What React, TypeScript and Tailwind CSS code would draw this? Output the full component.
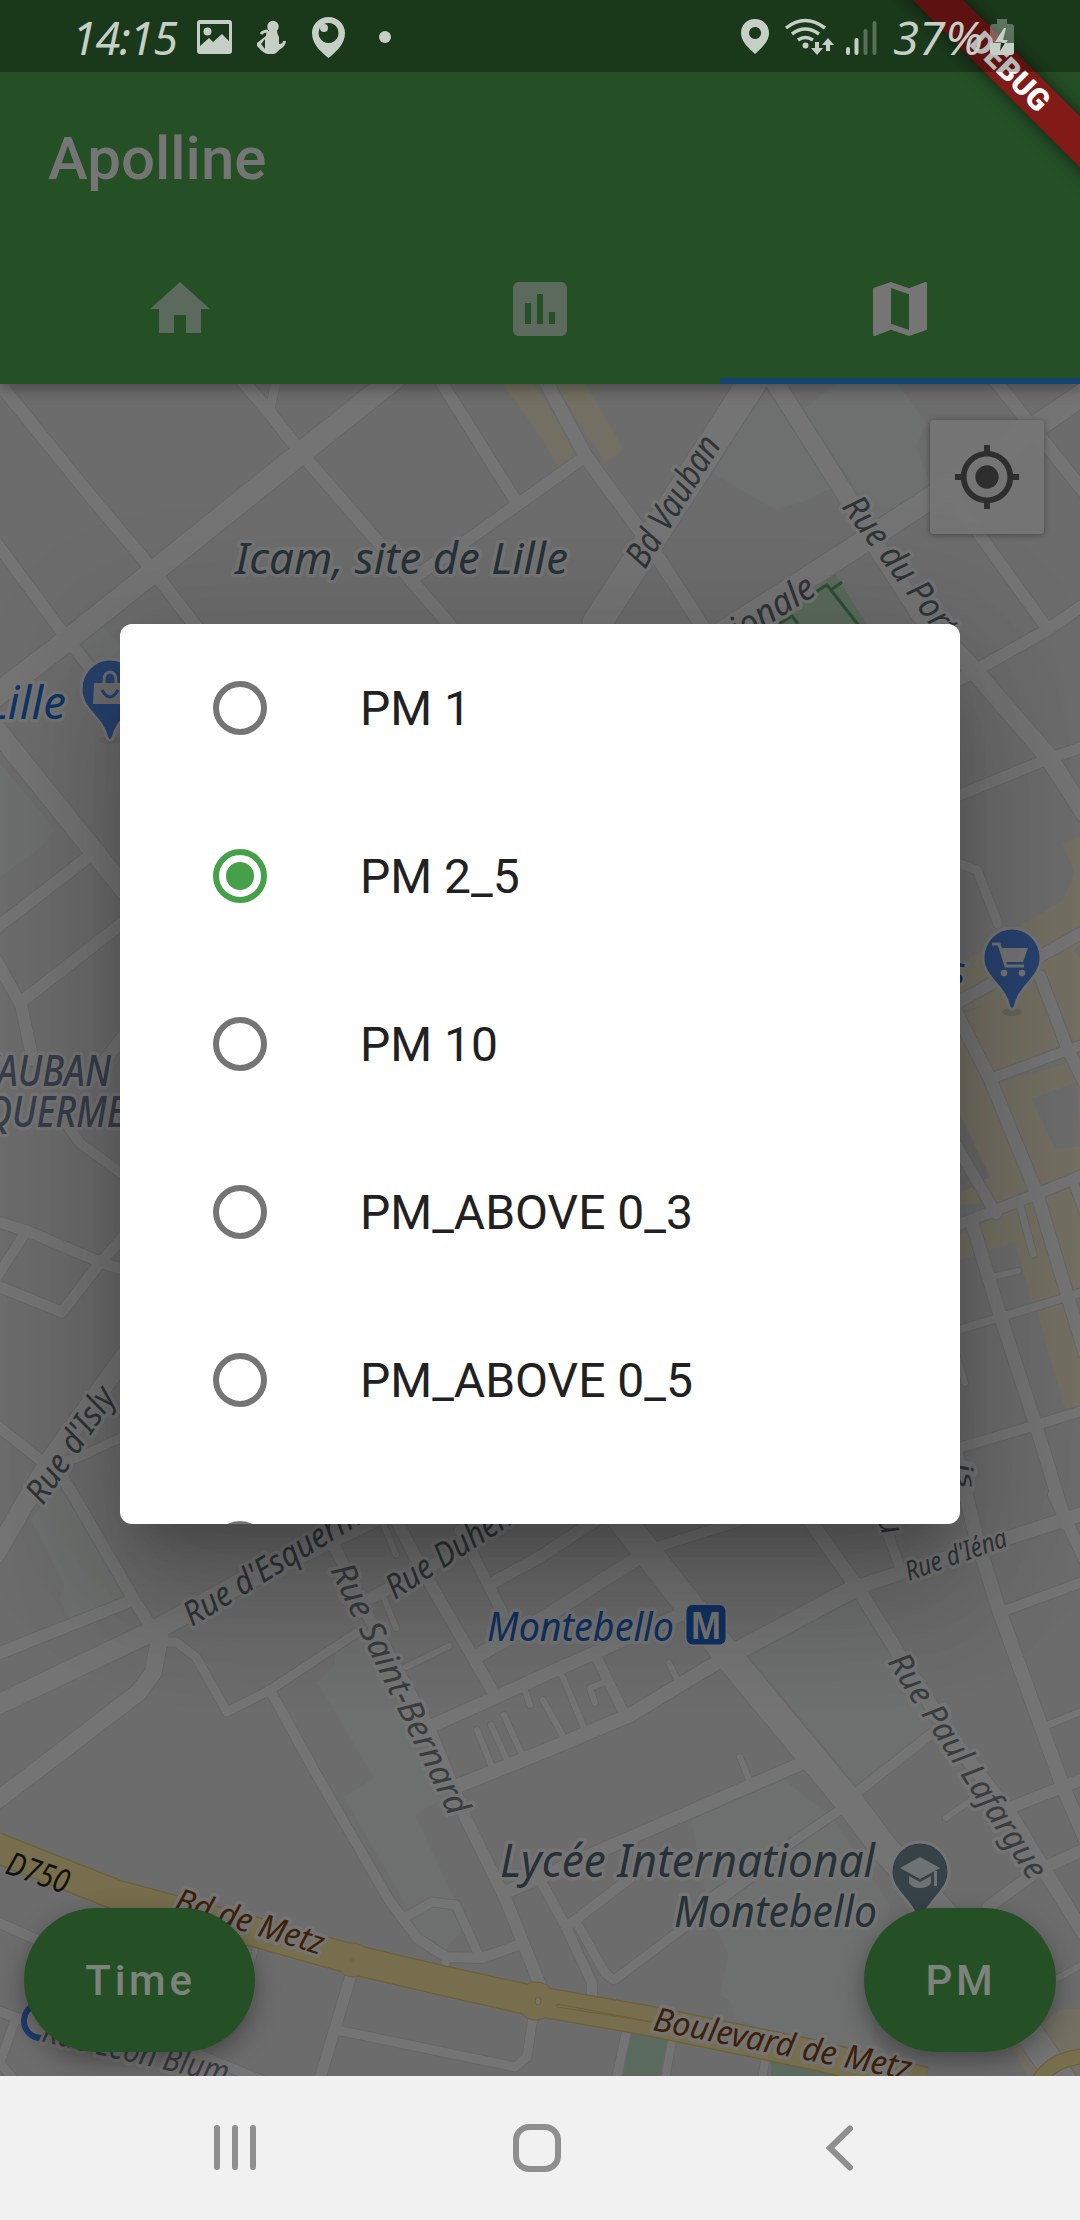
import React from "react";

type Road = [string, number];

/* Street centre lines with their widths, in screen pixels */
const roads: Road[] = [
  ["3,388 83,487 151,568 200,632", 13],
  ["395,378 301,453 153,572 65,642 -10,700", 22],
  ["242,380 270,413 301,453 411,580 456,632", 13],
  ["276,380 270,410", 9],
  ["440,380 517,503", 12],
  ["583,458 517,505 411,580", 12],
  ["-5,541 65,636", 12],
  ["65,636 120,706", 12],
  ["773,350 751,384 597,623", 29],
  ["770,375 846,495 864,527 919,613 965,660 1047,755 1085,814", 18],
  ["1085,393 946,488 840,557 720,634", 22],
  ["545,380 586,457 647,540 706,632", 14],
  ["995,380 1029,423 1085,493", 13],
  ["951,495 1046,627", 12],
  ["955,682 1047,630 1085,604", 12],
  ["955,797 1043,761 1085,746", 11],
  ["955,862 977,870 998,924", 9],
  ["955,1004 1085,931", 12],
  ["955,1010 990,1079 1037,1194 1085,1354", 13],
  ["1040,976 1068,1050 1085,1084", 12],
  ["990,1079 1068,1050 1085,1044", 10],
  ["955,1143 996,1214", 11],
  ["955,1226 1037,1194 1085,1174", 11],
  ["973,1226 1000,1315 1037,1429 1066,1524", 13],
  ["955,1331 1067,1297 1085,1291", 8],
  ["955,1449 1033,1426 1085,1410", 10],
  ["1020,1205 1033,1254", 7],
  ["992,1277 1018,1271", 6],
  ["1073,1182 1085,1215", 9],
  ["955,1350 965,1383", 6],
  ["955,1450 977,1540 998,1607 1063,1787 1085,1838", 14],
  ["-5,728 93,850 125,890", 20],
  ["-5,929 91,855", 12],
  ["21,1002 125,921", 12],
  ["-4,960 21,1005 33,1060", 12],
  ["90,1080 125,1034", 12],
  ["-5,1221 27,1231 100,1262 125,1270", 11],
  ["25,1233 -5,1280", 10],
  ["-5,1285 62,1312 100,1263 125,1235", 11],
  ["67,1125 80,1143 125,1176", 10],
  ["125,1356 50,1460 -5,1555", 19],
  ["-5,1424 43,1462", 11],
  ["60,1462 77,1458 125,1436", 9],
  ["60,1473 76,1500 134,1600 155,1633", 12],
  ["-5,1655 133,1600", 12],
  ["-5,1706 155,1630 241,1583 372,1518", 20],
  ["-5,1802 138,1693 153,1673 160,1637", 17],
  ["165,1642 176,1642 196,1657 227,1712 270,1690 358,1632", 9],
  ["270,1690 315,1772 389,1900 406,1923 417,1938 446,1957 482,1958 518,1945", 10],
  ["406,1917 432,1902 456,1905 480,1958", 9],
  ["446,1957 445,1970", 8],
  ["322,1520 365,1610 430,1730 465,1817 506,1900 540,1985", 12],
  ["367,1600 448,1557 503,1524", 12],
  ["492,1583 540,1557 596,1520", 12],
  ["475,1657 540,1620 638,1558", 14],
  ["396,1520 424,1573 496,1697", 12],
  ["460,1530 472,1553 503,1614", 11],
  ["382,1520 396,1555", 6],
  ["384,1598 396,1628", 6],
  ["406,1667 449,1646", 6],
  ["427,1728 496,1697 540,1677 700,1606", 13],
  ["455,1787 540,1753 630,1715 716,1663 747,1647 857,1587 1085,1513", 14],
  ["735,1652 857,1587", 18],
  ["477,1730 492,1767", 6],
  ["491,1725 508,1762", 6],
  ["504,1715 523,1757", 6],
  ["525,1690 530,1705", 6],
  ["543,1700 564,1738", 6],
  ["561,1673 585,1730", 6],
  ["597,1658 624,1713", 10],
  ["605,1682 590,1688 595,1703", 6],
  ["669,1663 679,1683", 6],
  ["622,1520 729,1657 850,1803 884,1848 953,1925 1062,2080", 28],
  ["657,1547 740,1521", 10],
  ["808,1518 857,1587 898,1653 953,1740 1012,1817 1046,1873 1085,1935", 14],
  ["882,1518 900,1567", 10],
  ["1054,1495 1085,1560", 12],
  ["1001,1612 1085,1581", 10],
  ["1043,1727 1085,1710", 7],
  ["1012,1807 1085,1778", 12],
  ["946,1818 974,1798", 6],
  ["860,1790 936,1730", 10],
  ["506,1892 595,1853 805,1762", 13],
  ["740,1757 750,1782", 6],
  ["840,1810 700,1905", 9],
  ["535,1870 566,1927 592,1983 592,2000", 10],
  ["566,1927 650,1863", 10],
  ["578,1925 605,1973 614,1980 750,1878", 9],
  ["988,1907 1039,1870 1085,1849", 12],
  ["1056,1979 1085,1963", 6],
  ["628,2025 616,2080", 9],
  ["672,2040 665,2080", 8],
  ["766,2055 762,2080", 8],
  ["-5,1921 60,1950", 10],
  ["-5,2010 40,2026", 10],
  ["15,2020 0,2063 14,2080", 9],
  ["351,1975 318,2085", 11],
  ["337,2030 515,2067 527,2057 534,2010", 9],
  ["60,2010 193,2052 270,2084", 10],
  ["255,1950 245,1990", 5],
];

const greens = [
  "766,390 833,487 806,501 776,510 712,473",
  "803,410 836,384 898,384 927,423 916,446 933,490 877,520",
  "0,763 55,830 38,850 0,877",
  "80,640 103,627 125,650 125,700",
  "31,1520 57,1487 69,1500 127,1595 69,1620 59,1597 65,1587",
  "337,1647 358,1633 441,1800 415,1815 455,1900 462,1930 445,1950 415,1930 403,1900 344,1797 374,1778 317,1682 334,1667",
  "750,1657 857,1598 933,1727 858,1787",
  "691,1820 784,1780 832,1817 890,1905 872,2040 920,2078 735,2020 730,2000 720,1995 728,1955 708,1905",
];

const tans = [
  "503,384 534,384 580,455 559,468 540,436",
  "554,384 586,384 624,450 605,462",
  "1062,844 1080,836 1080,945 1020,1000 960,1010 960,964 1023,924 1063,900 1075,872",
  "965,1014 1033,982 1062,1045 990,1073",
  "1042,967 1070,945 1080,958 1080,1056",
  "993,1085 1080,1059 1080,1172 1040,1185",
  "960,1036 980,1065 1030,1188 1000,1203 960,1205",
  "978,1226 1032,1201 1062,1294 1032,1302 1015,1242 960,1260 960,1234",
  "1043,1197 1070,1188 1080,1215 1080,1290 1073,1293",
  "1037,1312 1063,1303 1080,1335 1080,1406 1065,1409",
  "1010,2045 1060,2010 1080,2008 1080,2076 1028,2076",
  "0,384 12,384 0,400",
];

type LabelProps = {
  x: number;
  y: number;
  w: number;
  size?: number;
  angle?: number;
  color?: string;
  halo?: string;
  end?: boolean;
  weight?: number;
  children: string;
};

function Label({ x, y, w, size = 34, angle = 0, color = "#303436", halo = "#747474", end, weight = 400, children }: LabelProps) {
  return (
    <text
      x={x}
      y={y}
      transform={`rotate(${angle} ${x} ${y})`}
      textAnchor={end ? "end" : "start"}
      textLength={w}
      lengthAdjust="spacingAndGlyphs"
      fontSize={size}
      fontStyle="italic"
      fontWeight={weight}
      fill={color}
      stroke={halo}
      strokeWidth={7}
      strokeLinejoin="round"
      paintOrder="stroke"
    >
      {children}
    </text>
  );
}

const avenue = "-5,1847 117,1895 255,1932 355,1960 440,1980 530,2000 650,2021 815,2055 925,2082";

function CityMap() {
  return (
    <svg className="block h-full w-full" viewBox="0 384 1080 1692" preserveAspectRatio="none" fontFamily='"Noto Sans", sans-serif'>
      <rect y={384} width={1080} height={1692} fill="#6c6c6c" />
      {greens.map((p) => <polygon key={p} points={p} fill="#6d706e" />)}
      {tans.map((p) => <polygon key={p} points={p} fill="#736f62" />)}
      <polygon points="1032,1099 1077,1082 1080,1146 1055,1149" fill="#6c6c6c" />
      <polygon points="960,1114 990,1177 960,1193" fill="#696969" />
      <polygon points="834,573 869,627 776,627" fill="#5b6a5a" />
      <path d="M814 593l13-8 4 5 11-8M831 590l28 36M779 624l13-8 6 8" fill="none" stroke="#2b5135" strokeWidth={3} />
      <polygon points="631,2030 668,2038 660,2076 623,2076" fill="#5b6a5f" />
      <polygon points="771,2050 845,2076 771,2076" fill="#5b6a5f" />
      <g fill="none" stroke="#656565" strokeLinejoin="round" strokeLinecap="round">
        {roads.map(([p, w]) => <polyline key={p} points={p} strokeWidth={w + 1.6} />)}
      </g>
      <g fill="none" stroke="#747474" strokeLinejoin="round" strokeLinecap="round">
        {roads.map(([p, w]) => <polyline key={p} points={p} strokeWidth={w} />)}
      </g>
      <g fill="none" strokeLinejoin="round">
        <polyline points={avenue} stroke="#6d6039" strokeWidth={31} />
        <circle cx={353} cy={1960} r={17} fill="#766e4c" stroke="#6d6039" />
        <circle cx={536} cy={2001} r={19} fill="#766e4c" stroke="#6d6039" />
        <path d="M1038 2084q10-24 46-28" stroke="#6d6039" strokeWidth={16} />
        <polyline points={avenue} stroke="#766e4c" strokeWidth={28.5} />
        <path d="M1038 2084q10-24 46-28" stroke="#766e4c" strokeWidth={14} />
        <circle cx={352} cy={1960} r={2} stroke="#6d6039" />
        <ellipse cx={538} cy={2001} rx={3} ry={4} fill="#747474" stroke="#6d6039" />
        <path d="M557 2004l95 18-95-15z" stroke="#6d6039" />
      </g>

      <Label x={235} y={574} w={333} size={44} color="#263138">Icam, site de Lille</Label>
      <Label x={645} y={570} w={147} size={36} angle={-58.5}>Bd Vauban</Label>
      <Label x={841} y={507} w={166} size={35} angle={53}>Rue du Port</Label>
      <Label x={818} y={594} w={148} size={36} angle={-32} end>Nationale</Label>
      <Label x={66} y={719} w={80} size={46} color="#0f3466" end>Lille</Label>
      <Label x={966} y={985} w={22} size={40} color="#0f3466" end>s</Label>
      <Label x={111} y={1086} w={134} size={43} color="#373d4a" weight={500} end>VAUBAN</Label>
      <Label x={-14} y={1127} w={158} size={43} color="#373d4a" weight={500}>QUERMES</Label>
      <Label x={43} y={1506} w={132} angle={-56}>Rue d'Isly</Label>
      <Label x={192} y={1627} w={230} angle={-31.5}>Rue d'Esquermes</Label>
      <Label x={395} y={1600} w={152} angle={-33}>Rue Duhem</Label>
      <Label x={330} y={1570} w={275} angle={64.2} color="#3a3c3d">Rue Saint-Bernard</Label>
      <Label x={487} y={1641} w={187} size={40} color="#0f3161">Montebello</Label>
      <Label x={909} y={1581} w={106} size={27} angle={-19.5}>Rue d'Iéna</Label>
      <Label x={877} y={1519} w={19} size={32} angle={70}>u</Label>
      <Label x={956} y={1464} w={26} size={22} angle={80}>is</Label>
      <Label x={887} y={1662} w={262} size={33} angle={57} color="#3a3c3d">Rue Paul Lafargue</Label>
      <Label x={500} y={1877} w={375} size={45} color="#263138">Lycée International</Label>
      <Label x={877} y={1927} w={203} size={44} color="#263138" end>Montebello</Label>
      <Label x={4} y={1873} w={64} size={33} angle={19} color="#12120d" halo="none">D750</Label>
      <Label x={173} y={1910} w={154} size={33} angle={17} color="#3d2006">Bd de Metz</Label>
      <Label x={652} y={2030} w={262} size={33} angle={11} color="#3d2006">Boulevard de Metz</Label>
      <circle cx={41} cy={2021} r={17} fill="#747474" stroke="#1f3b6e" strokeWidth={6} />
      <Label x={226} y={2084} w={190} size={33} angle={13} color="#3a3c3d" end>Rue Léon Blum</Label>

      {/* shopping pin */}
      <ellipse cx={110} cy={740} rx={11} ry={4} fill="#656565" />
      <path d="M110 659a29 30 0 0 1 29 30c0 21-22 29-26 49q-3 5-6 0c-4-20-26-28-26-49a29 30 0 0 1 29-30z" fill="#27426f" stroke="#747474" strokeWidth={3} />
      <path d="M94 683h32v21H93z" fill="#6e6e6e" />
      <path d="M104 684v-3q0-9 6-9t6 9v3" fill="none" stroke="#6e6e6e" strokeWidth={3} />
      <path d="M102 690q8 14 16 0" fill="none" stroke="#27426f" strokeWidth={3} />

      {/* supermarket pin */}
      <ellipse cx={1012} cy={1012} rx={10} ry={4} fill="#66635a" />
      <path d="M1012 928a29 30 0 0 1 29 30c0 20-22 28-26 49q-3 5-6 0c-4-21-26-29-26-49a29 30 0 0 1 29-30z" fill="#27426f" stroke="#747474" strokeWidth={3} />
      <path d="M992 944h7l7 22h18" fill="none" stroke="#737373" strokeWidth={3} />
      <path d="M1001 948h27l-5 14h-18z" fill="#737373" />
      <circle cx={1004} cy={973} r={3.3} fill="#737373" />
      <circle cx={1022} cy={973} r={3.3} fill="#737373" />

      {/* school pin */}
      <path d="M920 1842a29 30 0 0 1 29 30c0 20-22 28-26 49q-3 5-6 0c-4-21-26-29-26-49a29 30 0 0 1 29-30z" fill="#364248" stroke="#747474" strokeWidth={3} />
      <path d="M900 1868l20-11 20 11-20 11zM909 1876l11 6 11-6v7q-3 5-11 5t-11-5zM934 1871h3v15h-3z" fill="#6f7273" />

      {/* metro sign */}
      <rect x={685} y={1604} width={42} height={42} rx={8} fill="#747474" />
      <rect x={686.5} y={1605} width={39} height={39.5} rx={6} fill="#0f3161" />
      <text x={706} y={1638.5} textAnchor="middle" textLength={30} lengthAdjust="spacingAndGlyphs" fontFamily='"Liberation Sans", Arial, sans-serif' fontWeight={700} fontSize={39} fill="#757575">M</text>
    </svg>
  );
}

const tone = "#c5cfc5";

function StatusIconsLeft() {
  return (
    <svg className="h-[72px] w-[216px]" viewBox="190 0 216 72" fill={tone}>
      <path fillRule="evenodd" d="M200 20h29a3 3 0 0 1 3 3v28a3 3 0 0 1-3 3h-29a3 3 0 0 1-3-3V23a3 3 0 0 1 3-3zm0 4v22l9-8 4 4 9-8 7 7V24z" />
      <circle cx={207.500} cy={31.500} r={4} />
      <circle cx={273} cy={26.500} r={5.700} />
      <path d="M268 31l9-1q0 4 2 7v7q4 0 4-3h3q0 5-7 9-3 4-6 4h-5q-4 0-11-8v-3l9-7q0-4 2-5z" />
      <path d="M261 34q2-3 7-3" stroke={tone} strokeWidth={3} fill="none" />
      <path d="M265 39l-4 5 4 5z" fill="#1d391d" />
      <path fillRule="evenodd" d="M328.500 17c9 0 16.500 7 16.500 16 0 11-9 19-16.500 25C321 52 312 44 312 33c0-9 7.500-16 16.500-16zm0 6a10 10 0 1 0 .1 0z" />
      <circle cx={324} cy={28} r={4} />
      <circle cx={385} cy={37} r={6} />
    </svg>
  );
}

function StatusIconsRight() {
  return (
    <svg className="h-[72px] w-[150px]" viewBox="735 0 150 72" fill={tone}>
      <path fillRule="evenodd" d="M755 19c8 0 14 6 14 14 0 9-8 15-14 21-6-6-14-12-14-21 0-8 6-14 14-14zm0 8a6 6 0 1 0 .1 0z" />
      <g fill="none" stroke={tone} strokeWidth={3.500}>
        <path d="M786 28q19-15 39 0M792 34q13-10 27 0M798 40q7-5 15 0" />
      </g>
      <circle cx={805.500} cy={45.500} r={3} />
      <path d="M815 42h4v6h4l-6 7-6-7h4zM826 51v-6h-4l6-7 6 7h-4v6z" />
      <g fill="none" strokeWidth={4} strokeLinecap="round">
        <path d="M848 49v4M856.500 40v13" stroke={tone} />
        <path d="M865.500 31v22M874.500 23v30" stroke="#586f58" />
      </g>
    </svg>
  );
}

function StatusBar() {
  return (
    <div className="absolute inset-x-0 top-0 z-20 flex h-[72px] items-center bg-black/28">
      <svg className="h-[72px] w-[190px]" viewBox="0 0 190 72">
        <text x={72} y={55} textLength={106} fontFamily='"Noto Sans", sans-serif' fontStyle="italic" fontSize={45} fill={tone}>14:15</text>
      </svg>
      <StatusIconsLeft />
      <div className="flex-1" />
      <StatusIconsRight />
      <svg className="h-[72px] w-[195px]" viewBox="885 0 195 72">
        <text x={893} y={55} textLength={90} lengthAdjust="spacingAndGlyphs" fontFamily='"Noto Sans", sans-serif' fontStyle="italic" fontSize={45} fill={tone}>37%</text>
        <path d="M997 19h10v5h4q3 0 3 3v16h-24V27q0-3 3-3h4z" fill={tone} fillOpacity={0.4} />
        <path d="M990 43h24v9q0 3-3 3h-18q-3 0-3-3z" fill={tone} />
        <path d="M1004 28l-9 14h7l-2 9 8-11h-5l3-12z" fill={tone} />
        <path d="M1001 43h4l-5 8z" fill="#1d241c" />
      </svg>
    </div>
  );
}

function DebugBanner() {
  return (
    <div className="pointer-events-none absolute top-0 right-0 z-10 h-[220px] w-[220px] overflow-hidden">
      <div className="absolute top-[54px] left-[-52px] flex h-[36px] w-[404px] rotate-45 items-center justify-center bg-[#821a18] text-[30.600px] leading-none font-black text-white shadow-[0_0_18px_rgba(0,0,0,0.6)]">
        DEBUG
      </div>
    </div>
  );
}

const tabs = [
  { name: "home", d: "M10 20v-6h4v6h5v-8h3L12 3 2 12h3v8z", cls: "text-[#5c6a5d]", bar: "bg-transparent" },
  { name: "chart", d: "M19 3H5c-1.100 0-2 .9-2 2v14c0 1.100.9 2 2 2h14c1.100 0 2-.9 2-2V5c0-1.100-.9-2-2-2zM9 17H7v-7h2v7zm4 0h-2V7h2v10zm4 0h-2v-4h2v4z", cls: "text-[#5c6a5d]", bar: "bg-transparent" },
  { name: "map", d: "M20.500 3l-.16.03L15 5.100 9 3 3.360 4.900c-.21.07-.36.25-.36.480V20.500c0 .28.22.5.5.5l.16-.03L9 18.900l6 2.100 5.640-1.900c.21-.07.36-.25.36-.480V3.500c0-.28-.22-.5-.5-.5zM15 19l-6-2.110V5l6 2.110V19z", cls: "text-[#757575]", bar: "bg-[#114470]" },
];

const options = ["PM 1", "PM 2_5", "PM 10", "PM_ABOVE 0_3", "PM_ABOVE 0_5", "PM_ABOVE 1"];

export default function App() {
  return (
    <div className="relative flex h-[2220px] w-[1080px] flex-col overflow-hidden bg-[#6c6c6c] font-[Roboto,sans-serif]">
      <header className="z-[1] flex h-[384px] flex-col bg-[#255026] pt-[72px] shadow-[0_4px_14px_rgba(0,0,0,0.35)]">
        <div className="flex h-[168px] items-center px-12 pt-[5px]">
          <h1 className="text-[60px] leading-none font-medium text-[#757575]">Apolline</h1>
        </div>
        <nav className="grid h-[144px] grid-cols-3">
          {tabs.map((t) => (
            <div key={t.name} className="flex flex-col">
              <div className="flex flex-1 items-center justify-center">
                <svg viewBox="0 0 24 24" fill="currentColor" className={`h-[72px] w-[72px] ${t.cls}`}><path d={t.d} /></svg>
              </div>
              <div className={`h-[6px] ${t.bar}`} />
            </div>
          ))}
        </nav>
      </header>

      <main className="relative h-[1692px]">
        <CityMap />
        <div className="absolute top-[36px] right-[36px] flex h-[114px] w-[114px] items-center justify-center rounded-[4px] bg-[#757575]/90 shadow-[0_1px_6px_rgba(0,0,0,0.35)]">
          <svg viewBox="0 0 24 24" fill="#2e2e2e" className="h-[70px] w-[70px]">
            <path d="M12 8c-2.210 0-4 1.790-4 4s1.790 4 4 4 4-1.790 4-4-1.790-4-4-4zm8.940 3c-.46-4.170-3.770-7.480-7.940-7.940V1h-2v2.060C6.830 3.520 3.520 6.830 3.060 11H1v2h2.060c.46 4.170 3.770 7.480 7.940 7.940V23h2v-2.060c4.170-.46 7.480-3.770 7.940-7.940H23v-2h-2.060zM12 19c-3.870 0-7-3.130-7-7s3.130-7 7-7 7 3.130 7 7-3.130 7-7 7z" />
          </svg>
        </div>
        <div className="absolute inset-x-[24px] bottom-[24px] flex justify-between text-[42px] font-medium tracking-[3.750px] text-[#7c837c]">
          <div className="flex h-[144px] w-[231px] items-center justify-center rounded-full bg-[#255026] pl-[2px] shadow-[0_9px_24px_rgba(0,0,0,0.35)]">Time</div>
          <div className="flex h-[144px] w-[192px] items-center justify-center rounded-full bg-[#255026] pl-[2px] shadow-[0_9px_24px_rgba(0,0,0,0.35)]">PM</div>
        </div>
      </main>

      <div className="absolute inset-x-0 top-[72px] bottom-[144px] z-[2] flex items-center justify-center overflow-hidden">
        <div className="h-[900px] w-[840px] rounded-[12px] shadow-[0_33px_45px_-21px_rgba(0,0,0,0.2),0_72px_114px_9px_rgba(0,0,0,0.14),0_27px_138px_24px_rgba(0,0,0,0.12)]">
          <div className="h-full overflow-hidden rounded-[12px] bg-white">
            {options.map((o, i) => (
              <div key={o} className="flex h-[168px] items-center pl-[93px]">
                <div className={`flex h-[54px] w-[54px] shrink-0 items-center justify-center rounded-full border-[6px] ${i === 1 ? "border-[#46a049]" : "border-[#757575]"}`}>
                  {i === 1 && <div className="h-[28px] w-[28px] rounded-full bg-[#46a049]" />}
                </div>
                <span className="ml-[93px] pt-[2px] text-[48px] leading-none whitespace-nowrap text-[#212121]">{o}</span>
              </div>
            ))}
          </div>
        </div>
      </div>

      <DebugBanner />
      <StatusBar />

      <footer className="z-[3] flex h-[144px] items-center justify-center bg-[#f1f1f1]">
        <svg className="h-[60px] w-[700px]" viewBox="187 2118 700 60" fill="none" stroke="#8f8f8f" strokeWidth={6} strokeLinecap="round">
          <g transform="translate(-3 0)">
            <path d="M217 2128v39M235 2128v39M253 2128v39" />
            <rect x={516} y={2127} width={42} height={42} rx={13} />
            <path d="M850 2128.500l-20 19.500 20 19.500" />
          </g>
        </svg>
      </footer>
    </div>
  );
}
